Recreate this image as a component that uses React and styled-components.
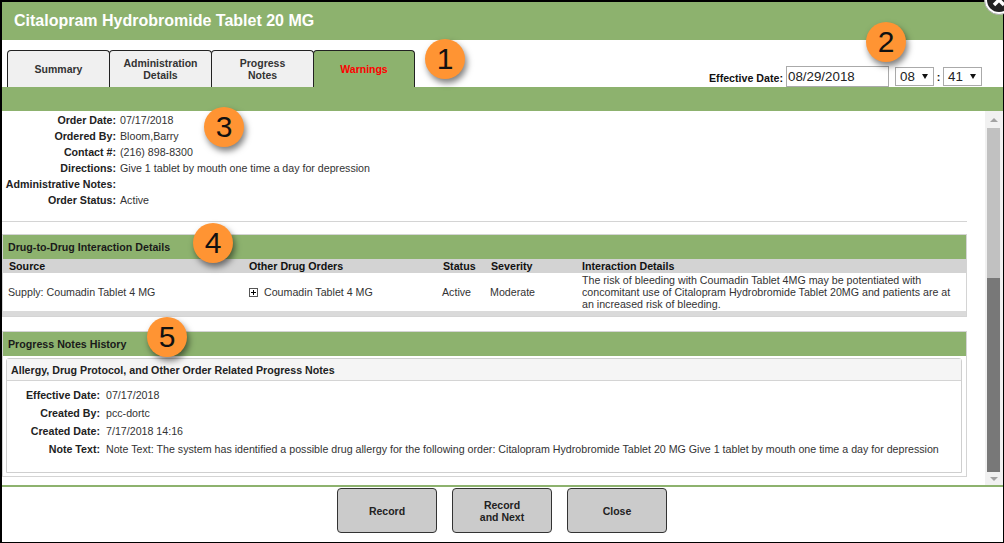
import React from "react";
import styled, { createGlobalStyle } from "styled-components";

const GREEN = "#8db26e";

const details = [
  ["Order Date:", "07/17/2018"],
  ["Ordered By:", "Bloom,Barry"],
  ["Contact #:", "(216) 898-8300"],
  ["Directions:", "Give 1 tablet by mouth one time a day for depression"],
  ["Administrative Notes:", ""],
  ["Order Status:", "Active"],
];

const notes = [
  ["Effective Date:", "07/17/2018"],
  ["Created By:", "pcc-dortc"],
  ["Created Date:", "7/17/2018 14:16"],
  [
    "Note Text:",
    "Note Text: The system has identified a possible drug allergy for the following order: Citalopram Hydrobromide Tablet 20 MG Give 1 tablet by mouth one time a day for depression",
  ],
];

const tabs = [
  { label: ["Summary"] },
  { label: ["Administration", "Details"] },
  { label: ["Progress", "Notes"] },
  { label: ["Warnings"], active: true },
];

const badges = [
  { n: 1, x: 425, y: 39 },
  { n: 2, x: 866, y: 22 },
  { n: 3, x: 204, y: 107 },
  { n: 4, x: 193, y: 223 },
  { n: 5, x: 147, y: 317 },
];

const App = () => {
  return (
    <>
      <GlobalStyle />
      <Frame>
        <TitleBar>Citalopram Hydrobromide Tablet 20 MG</TitleBar>
        <TabZone>
          <Tabs>
            {tabs.map((t) => (
              <Tab key={t.label[0]} $active={t.active}>
                {t.label.map((l) => (
                  <span key={l}>{l}</span>
                ))}
              </Tab>
            ))}
          </Tabs>
          <DateControls>
            <DateLabel>Effective Date:</DateLabel>
            <DateInput defaultValue="08/29/2018" />
            <SelectBox>
              08
              <Caret />
            </SelectBox>
            <Colon>:</Colon>
            <SelectBox>
              41
              <Caret />
            </SelectBox>
          </DateControls>
        </TabZone>
        <GreenStrip />
        <Body>
          <Content>
            <Details>
              {details.map(([k, v]) => (
                <DetailRow key={k}>
                  <DetailLabel>{k}</DetailLabel>
                  <span>{v}</span>
                </DetailRow>
              ))}
            </Details>
            <Rule />
            <Section>
              <SectionHeader>Drug-to-Drug Interaction Details</SectionHeader>
              <HeadRow>
                <span>Source</span>
                <span>Other Drug Orders</span>
                <span>Status</span>
                <span>Severity</span>
                <span>Interaction Details</span>
              </HeadRow>
              <BodyRow>
                <span>Supply: Coumadin Tablet 4 MG</span>
                <OrderCell>
                  <PlusIcon />
                  Coumadin Tablet 4 MG
                </OrderCell>
                <span>Active</span>
                <span>Moderate</span>
                <InteractionText>
                  The risk of bleeding with Coumadin Tablet 4MG may be potentiated with
                  <br />
                  concomitant use of Citalopram Hydrobromide Tablet 20MG and patients are at
                  <br />
                  an increased risk of bleeding.
                </InteractionText>
              </BodyRow>
              <TableFoot />
            </Section>
            <NotesSection>
              <SectionHeader>Progress Notes History</SectionHeader>
              <NotesCard>
                <CardHeader>Allergy, Drug Protocol, and Other Order Related Progress Notes</CardHeader>
                <NotesList>
                  {notes.map(([k, v]) => (
                    <NoteRow key={k}>
                      <NoteLabel>{k}</NoteLabel>
                      <span>{v}</span>
                    </NoteRow>
                  ))}
                </NotesList>
              </NotesCard>
            </NotesSection>
          </Content>
          <Scrollbar>
            <ArrowBox $h={17}>
              <ArrowUp />
            </ArrowBox>
            <ThumbLight />
            <ThumbDark />
            <ArrowBox $h={13}>
              <ArrowDown />
            </ArrowBox>
          </Scrollbar>
        </Body>
        <Footer>
          <FootButton>Record</FootButton>
          <FootButton>
            Record
            <br />
            and Next
          </FootButton>
          <FootButton>Close</FootButton>
        </Footer>
        {badges.map((b) => (
          <Badge key={b.n} $x={b.x} $y={b.y}>
            {b.n}
          </Badge>
        ))}
        <CloseIcon viewBox="0 0 30 30" width="30" height="30">
          <circle cx="15" cy="15" r="14.5" fill="#fff" stroke="#aaa" strokeWidth="1" />
          <circle cx="15" cy="15" r="12" fill="#222" />
          <path d="M10 10l10 10M20 10l-10 10" stroke="#fff" strokeWidth="3.5" />
        </CloseIcon>
      </Frame>
    </>
  );
};

export default App;

const PlusIcon = () => (
  <PlusSvg viewBox="0 0 9 9" width="9" height="9">
    <rect x="0.5" y="0.5" width="8" height="8" fill="#fff" stroke="#555" />
    <path d="M2 4.5h5M4.5 2v5" stroke="#000" />
  </PlusSvg>
);

const GlobalStyle = createGlobalStyle`
  html, body {
    margin: 0;
    padding: 0;
    background: #fff;
    overflow: hidden;
  }
  body {
    font-family: "Liberation Sans", Arial, sans-serif;
    font-size: 10.67px;
    color: #222;
  }
`;

const Frame = styled.div`
  position: relative;
  box-sizing: border-box;
  width: 1004px;
  height: 543px;
  display: flex;
  flex-direction: column;
  background: #fff;
  border-style: solid;
  border-color: #000;
  border-width: 2px 1px 1px 2px;
`;

const TitleBar = styled.div`
  height: 38px;
  flex: none;
  box-sizing: border-box;
  padding-left: 12px;
  background: ${GREEN};
  color: #fff;
  font-size: 16px;
  font-weight: bold;
  line-height: 37px;
`;

const TabZone = styled.div`
  height: 47px;
  flex: none;
  display: flex;
  justify-content: space-between;
  align-items: flex-end;
  padding-left: 5px;
`;

const Tabs = styled.div`
  display: flex;
`;

const Tab = styled.div`
  box-sizing: border-box;
  width: 103px;
  height: 37px;
  margin-right: -1px;
  display: flex;
  flex-direction: column;
  align-items: center;
  justify-content: center;
  border: 1px solid #222;
  border-bottom: none;
  border-radius: 4px 4px 0 0;
  background: ${(p) => (p.$active ? GREEN : "#f0f0f0")};
  color: ${(p) => (p.$active ? "#ff0000" : "#333")};
  font-size: 10.5px;
  font-weight: bold;
  line-height: 12px;
  &:last-child {
    width: 102px;
  }
`;

const DateControls = styled.div`
  display: flex;
  align-items: center;
  padding-right: 21px;
  height: 21px;
`;

const DateLabel = styled.span`
  font-weight: bold;
  color: #111;
  margin-right: 3px;
  padding-top: 2px;
`;

const DateInput = styled.input`
  box-sizing: border-box;
  width: 103px;
  height: 21px;
  padding: 0 1px;
  margin: 0 6px 0 0;
  border: 1px solid #aaa;
  font-family: "Liberation Sans", Arial, sans-serif;
  font-size: 13.33px;
  color: #222;
  outline: none;
`;

const SelectBox = styled.div`
  box-sizing: border-box;
  width: 39px;
  height: 19px;
  display: flex;
  align-items: center;
  justify-content: space-between;
  padding: 0 5px 0 4px;
  border: 1px solid #aaa;
  font-size: 13.33px;
  color: #222;
`;

const Caret = styled.i`
  width: 0;
  height: 0;
  border-left: 3.5px solid transparent;
  border-right: 3.5px solid transparent;
  border-top: 5px solid #111;
`;

const Colon = styled.span`
  width: 9px;
  text-align: center;
  font-weight: bold;
  color: #111;
`;

const GreenStrip = styled.div`
  height: 24px;
  flex: none;
  background: ${GREEN};
`;

const Body = styled.div`
  height: 374px;
  flex: none;
  display: flex;
`;

const Content = styled.div`
  flex: 1;
  min-width: 0;
  padding-right: 18px;
`;

const Details = styled.div`
  padding-top: 1px;
`;

const DetailRow = styled.div`
  display: grid;
  grid-template-columns: 114px 1fr;
  column-gap: 4px;
  height: 16px;
  line-height: 16px;
  color: #333;
`;

const DetailLabel = styled.span`
  font-weight: bold;
  color: #222;
  text-align: right;
  white-space: nowrap;
`;

const Rule = styled.div`
  height: 1px;
  background: #d4d4d4;
  margin: 13px 0 12px;
`;

const Section = styled.div`
  border: 1px solid #d4d4d4;
`;

const NotesSection = styled(Section)`
  margin-top: 14px;
  height: 146px;
  box-sizing: border-box;
`;

const SectionHeader = styled.div`
  height: 24px;
  padding-left: 5px;
  background: ${GREEN};
  color: #1a1a1a;
  font-weight: bold;
  line-height: 25px;
`;

const HeadRow = styled.div`
  display: grid;
  grid-template-columns: 240px 194px 48px 91px 1fr;
  height: 14px;
  padding-left: 6px;
  background: #d3d3d3;
  color: #111;
  font-weight: bold;
  line-height: 15px;
`;

const BodyRow = styled.div`
  display: grid;
  grid-template-columns: 241px 193px 48px 92px 1fr;
  align-items: center;
  height: 38px;
  padding-left: 5px;
  color: #333;
`;

const OrderCell = styled.span`
  display: flex;
  align-items: center;
  gap: 6px;
`;

const PlusSvg = styled.svg`
  flex: none;
`;

const InteractionText = styled.span`
  line-height: 12px;
  white-space: nowrap;
`;

const TableFoot = styled.div`
  height: 5px;
  background: #dadada;
`;

const NotesCard = styled.div`
  box-sizing: border-box;
  height: 115px;
  margin: 2px 4px 0 3px;
  border: 1px solid #cfcfcf;
  border-radius: 3px 3px 0 0;
`;

const CardHeader = styled.div`
  height: 21px;
  padding-left: 4px;
  background: #f5f5f5;
  border-bottom: 1px solid #d4d4d4;
  color: #222;
  font-weight: bold;
  line-height: 22px;
`;

const NotesList = styled.div`
  padding-top: 5px;
`;

const NoteRow = styled.div`
  display: grid;
  grid-template-columns: 93px 1fr;
  column-gap: 6px;
  height: 18px;
  line-height: 18px;
  color: #333;
  white-space: nowrap;
`;

const NoteLabel = styled.span`
  font-weight: bold;
  color: #222;
  text-align: right;
`;

const Scrollbar = styled.div`
  box-sizing: border-box;
  width: 18px;
  flex: none;
  display: flex;
  flex-direction: column;
  padding-left: 2px;
  background: #f1f1f1;
`;

const ArrowBox = styled.div`
  width: 13px;
  height: ${(p) => p.$h}px;
  flex: none;
  display: flex;
  align-items: center;
  justify-content: center;
`;

const ArrowUp = styled.i`
  width: 0;
  height: 0;
  border-left: 4px solid transparent;
  border-right: 4px solid transparent;
  border-bottom: 4px solid #a3a3a3;
`;

const ArrowDown = styled.i`
  width: 0;
  height: 0;
  border-left: 4px solid transparent;
  border-right: 4px solid transparent;
  border-top: 4px solid #a3a3a3;
`;

const ThumbLight = styled.div`
  width: 13px;
  height: 150px;
  flex: none;
  background: #c1c1c1;
`;

const ThumbDark = styled.div`
  width: 13px;
  flex: 1;
  background: #787878;
`;

const Footer = styled.div`
  flex: 1;
  display: flex;
  justify-content: center;
  gap: 15px;
  padding: 1px 1px 0 0;
  border-top: 2px solid ${GREEN};
`;

const FootButton = styled.button`
  box-sizing: border-box;
  width: 100px;
  height: 45px;
  padding: 0;
  border: 1px solid #333;
  border-radius: 4px;
  background: #cbcbcb;
  color: #222;
  font-family: "Liberation Sans", Arial, sans-serif;
  font-size: 10.5px;
  font-weight: bold;
  line-height: 12px;
`;

const Badge = styled.div`
  position: absolute;
  left: ${(p) => p.$x - 2}px;
  top: ${(p) => p.$y - 2}px;
  width: 40px;
  height: 40px;
  border-radius: 50%;
  background: #ff9433;
  box-shadow: 2px 4px 6px rgba(0, 0, 0, 0.5);
  color: #111;
  font-size: 30px;
  line-height: 40px;
  text-align: center;
`;

const CloseIcon = styled.svg`
  position: absolute;
  left: 982px;
  top: -17px;
`;
